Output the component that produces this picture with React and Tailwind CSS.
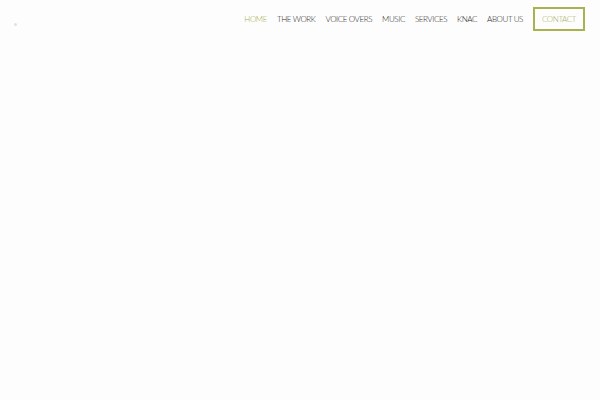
import React from 'react';

const links = ['HOME', 'THE WORK', 'VOICE OVERS', 'MUSIC', 'SERVICES', 'KNAC', 'ABOUT US'];

function App() {
  return (
    <div className="min-h-screen bg-[#fdfdfd]" style={{ fontFamily: 'Lato, "Open Sans", sans-serif' }}>
      {/* Header */}
      <header className="flex h-[38px] items-start justify-between">
        <div className="ml-[14px] mt-[23px] h-[3px] w-[3px] rounded-full bg-[#e2e2e2]" />
        <nav className="mr-[15px] mt-[7px] flex items-center">
          {links.map((l, i) => (
            <a
              key={l}
              href="#"
              className={`mr-[10px] text-[8px] font-light leading-[24px] tracking-[-0.4px] ${i === 0 ? 'text-[#a3ad4f]' : 'text-[#1f1f1f]'}`}
            >
              {l}
            </a>
          ))}
          <a
            href="#"
            className="flex h-[24px] w-[52px] items-center justify-center border-2 border-[#a8b34f] text-[8px] font-light tracking-[-0.4px] text-[#a7b05a]"
          >
            CONTACT
          </a>
        </nav>
      </header>
    </div>
  );
}

export default App;
